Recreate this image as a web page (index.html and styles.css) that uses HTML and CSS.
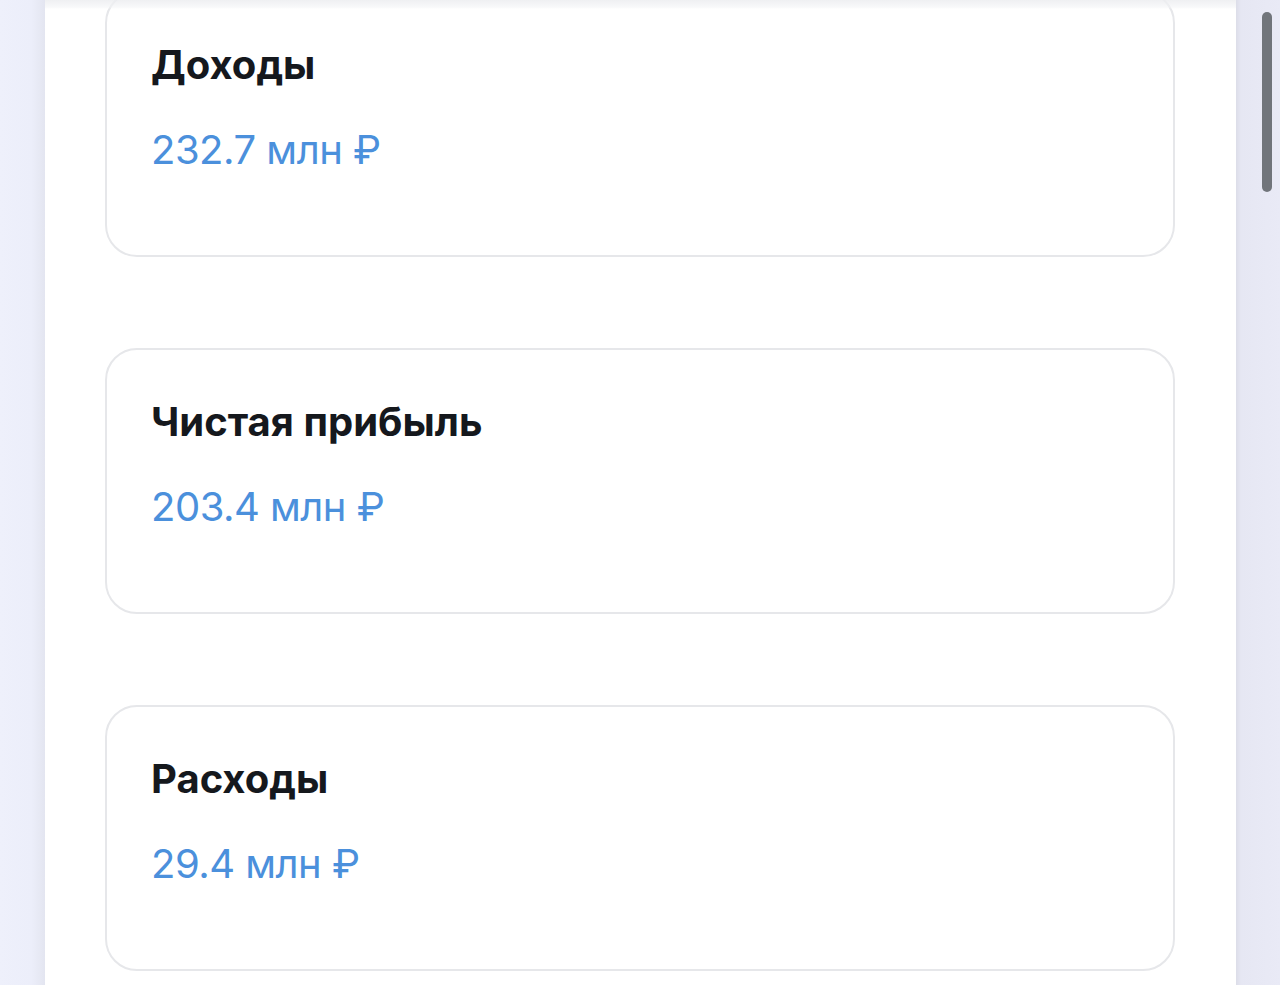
FILE: index.html
```html
<!DOCTYPE html>
<html lang="ru">
<head>
<meta charset="utf-8">
<title>Финансы</title>
<link rel="stylesheet" href="styles.css">
</head>
<body>
<div class="page">
  <div class="gutter-left"></div>
  <main class="panel">
    <div class="top-fade"></div>
    <div class="cards">
      <section class="card">
        <h2 class="card-title">Доходы</h2>
        <div class="card-value">232.7 млн ₽</div>
      </section>
      <section class="card">
        <h2 class="card-title">Чистая прибыль</h2>
        <div class="card-value">203.4 млн ₽</div>
      </section>
      <section class="card">
        <h2 class="card-title">Расходы</h2>
        <div class="card-value">29.4 млн ₽</div>
      </section>
    </div>
  </main>
  <div class="gutter-right">
    <div class="scroll-thumb"></div>
  </div>
</div>
</body>
</html>
```
FILE: styles.css
```css
html, body {
  margin: 0;
  padding: 0;
  height: 100%;
  overflow: hidden;
}
body {
  font-family: Inter, "Noto Sans", sans-serif;
  background: #eceefa;
}
.page {
  display: flex;
  height: 985px;
  overflow: hidden;
}
.gutter-left {
  width: 45px;
  flex: none;
  background: linear-gradient(to right, #eef0fb 0%, #eceefa 70%, #e3e5f0 100%);
}
.panel {
  position: relative;
  width: 1191px;
  flex: none;
  background: #ffffff;
  overflow: hidden;
}
.top-fade {
  position: absolute;
  left: 0;
  right: 0;
  top: 0;
  height: 9px;
  background: linear-gradient(to bottom, rgba(236,237,240,0.85), rgba(244,245,247,0.6) 80%, rgba(255,255,255,0));
  z-index: 2;
}
.cards {
  display: flex;
  flex-direction: column;
  gap: 91px;
  padding: 0 61px 0 60px;
  margin-top: -9px;
}
.card {
  box-sizing: border-box;
  height: 266px;
  border: 2px solid #e6e7ea;
  border-radius: 32px;
  padding: 48px 44px 0 44px;
}
.card-title {
  margin: 0;
  font-size: 40px;
  line-height: 48px;
  font-weight: 700;
  color: #15181d;
  letter-spacing: 0;
}
.card-value {
  margin-top: 37px;
  font-size: 40px;
  line-height: 48px;
  font-weight: 400;
  color: #4b90dc;
  letter-spacing: -0.5px;
}
.gutter-right {
  position: relative;
  width: 44px;
  flex: none;
  background: linear-gradient(to right, #dcdde8 0px, #e6e7f3 5px, #e9eaf6 100%);
}
.scroll-thumb {
  position: absolute;
  left: 26px;
  top: 12px;
  width: 10px;
  height: 180px;
  border-radius: 5px;
  background: #71757b;
}
```
